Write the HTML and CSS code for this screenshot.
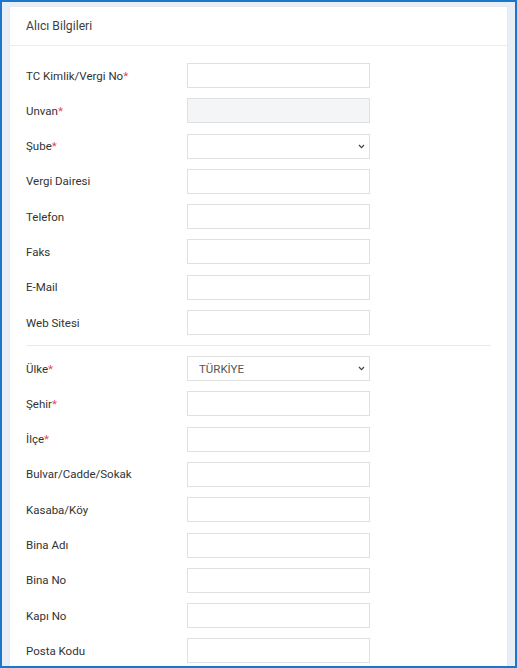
FILE: index.html
```html
<!DOCTYPE html>
<html lang="tr">
<head>
<meta charset="utf-8">
<title>Alıcı Bilgileri</title>
<link rel="stylesheet" href="styles.css">
</head>
<body>
<div class="frame">
  <div class="card">
    <div class="card-header">Alıcı Bilgileri</div>
    <div class="card-body">
      <div class="group">
        <div class="row"><label class="lbl">TC Kimlik/Vergi No<span class="req">*</span></label><input class="ctl" type="text"></div>
        <div class="row"><label class="lbl">Unvan<span class="req">*</span></label><input class="ctl disabled" type="text" disabled></div>
        <div class="row"><label class="lbl">Şube<span class="req">*</span></label><div class="sel"><div class="ctl sel-box"></div><svg class="chev" width="7" height="5" viewBox="0 0 7 5"><path d="M1 1 L3.5 3.6 L6 1" fill="none" stroke="#444" stroke-width="1.3"/></svg></div></div>
        <div class="row"><label class="lbl">Vergi Dairesi</label><input class="ctl" type="text"></div>
        <div class="row"><label class="lbl">Telefon</label><input class="ctl" type="text"></div>
        <div class="row"><label class="lbl">Faks</label><input class="ctl" type="text"></div>
        <div class="row"><label class="lbl">E-Mail</label><input class="ctl" type="text"></div>
        <div class="row"><label class="lbl">Web Sitesi</label><input class="ctl" type="text"></div>
      </div>
      <hr class="divider">
      <div class="group">
        <div class="row"><label class="lbl">Ülke<span class="req">*</span></label><div class="sel"><div class="ctl sel-box">TÜRKİYE</div><svg class="chev" width="7" height="5" viewBox="0 0 7 5"><path d="M1 1 L3.5 3.6 L6 1" fill="none" stroke="#444" stroke-width="1.3"/></svg></div></div>
        <div class="row"><label class="lbl">Şehir<span class="req">*</span></label><input class="ctl" type="text"></div>
        <div class="row"><label class="lbl">İlçe<span class="req">*</span></label><input class="ctl" type="text"></div>
        <div class="row"><label class="lbl">Bulvar/Cadde/Sokak</label><input class="ctl" type="text"></div>
        <div class="row"><label class="lbl">Kasaba/Köy</label><input class="ctl" type="text"></div>
        <div class="row"><label class="lbl">Bina Adı</label><input class="ctl" type="text"></div>
        <div class="row"><label class="lbl">Bina No</label><input class="ctl" type="text"></div>
        <div class="row"><label class="lbl">Kapı No</label><input class="ctl" type="text"></div>
        <div class="row"><label class="lbl">Posta Kodu</label><input class="ctl" type="text"></div>
      </div>
    </div>
  </div>
</div>
</body>
</html>
```
FILE: styles.css
```css
* { box-sizing: border-box; }
html, body { margin: 0; padding: 0; }
body {
  font-family: Roboto, "Liberation Sans", Arial, sans-serif;
  color: #333;
  background: #e9eff6;
}
.frame {
  width: 517px;
  height: 668px;
  border: 2px solid #1b77cc;
  background: #e8eef5;
  padding: 4px 7px 0 7px;
  overflow: hidden;
}
.card {
  background: #fff;
  border: 1px solid #e6e9ed;
  border-bottom: none;
  height: 700px;
}
.card-header {
  height: 39px;
  border-bottom: 1px solid #ebedf0;
  padding: 0 16px;
  display: flex;
  align-items: center;
  font-size: 12.2px;
  color: #3f3f3f;
}
.card-body {
  padding: 17px 16px 0 16px;
}
.group {
  display: flex;
  flex-direction: column;
  gap: 10.3px;
}
.row {
  display: flex;
  align-items: center;
  height: 25px;
}
.lbl {
  width: 161px;
  font-size: 11.5px;
  color: #333;
}
.req { color: #e8455f; }
.ctl {
  width: 183px;
  height: 25px;
  border: 1px solid #e0e0e0;
  background: #fff;
  font-family: inherit;
  font-size: 11.5px;
  padding: 0 11px;
  margin: 0;
  outline: none;
  border-radius: 0;
}
.ctl.disabled { background: #f4f5f7; }
.sel { position: relative; }
.sel-box {
  display: flex;
  align-items: center;
  color: #555;
}
.chev {
  position: absolute;
  right: 5px;
  top: 10px;
}
.divider {
  border: none;
  border-top: 1px solid #e8eaed;
  margin: 10px 0 10px 0;
}
```
